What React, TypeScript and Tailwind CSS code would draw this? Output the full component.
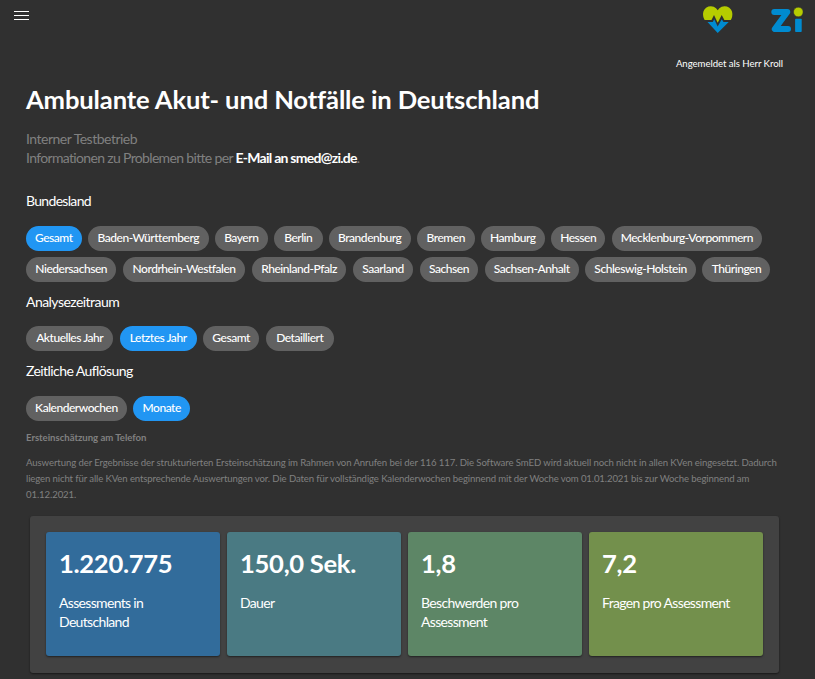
type ChipData = { label: string; width: string; active?: boolean };

const statesFirst: ChipData[] = [
  { label: "Gesamt", width: "w-[55.6px]", active: true },
  { label: "Baden-Württemberg", width: "w-[120.6px]" },
  { label: "Bayern", width: "w-[52.6px]" },
  { label: "Berlin", width: "w-[48.6px]" },
  { label: "Brandenburg", width: "w-[81.6px]" },
  { label: "Bremen", width: "w-[57.6px]" },
  { label: "Hamburg", width: "w-[63.6px]" },
  { label: "Hessen", width: "w-[54.6px]" },
  { label: "Mecklenburg-Vorpommern", width: "w-[150px]" },
];

const statesSecond: ChipData[] = [
  { label: "Niedersachsen", width: "w-[90.4px]" },
  { label: "Nordrhein-Westfalen", width: "w-[122.6px]" },
  { label: "Rheinland-Pfalz", width: "w-[94.6px]" },
  { label: "Saarland", width: "w-[60.6px]" },
  { label: "Sachsen", width: "w-[58.6px]" },
  { label: "Sachsen-Anhalt", width: "w-[93.8px]" },
  { label: "Schleswig-Holstein", width: "w-[111.2px]" },
  { label: "Thüringen", width: "w-[68px]" },
];

const periods: ChipData[] = [
  { label: "Aktuelles Jahr", width: "w-[87.4px]" },
  { label: "Letztes Jahr", width: "w-[76.8px]", active: true },
  { label: "Gesamt", width: "w-[56.4px]" },
  { label: "Detailliert", width: "w-[68px]" },
];

const resolutions: ChipData[] = [
  { label: "Kalenderwochen", width: "w-[100.8px]" },
  { label: "Monate", width: "w-[57px]", active: true },
];

const stats = [
  { value: "1.220.775", lines: ["Assessments in", "Deutschland"], color: "bg-[#326c9b]" },
  { value: "150,0 Sek.", lines: ["Dauer"], color: "bg-[#4a7a83]" },
  { value: "1,8", lines: ["Beschwerden pro", "Assessment"], color: "bg-[#5d8666]" },
  { value: "7,2", lines: ["Fragen pro Assessment"], color: "bg-[#73904c]" },
];

function ChipRow({ chips }: { chips: ChipData[] }) {
  return (
    <div className="flex gap-[6.4px]">
      {chips.map((chip) => (
        <button
          key={chip.label}
          className={`flex h-[25px] shrink-0 items-center justify-center rounded-full pb-px text-[12px] font-medium tracking-[-0.47px] whitespace-nowrap ${chip.width} ${
            chip.active ? "bg-[#2196f3]" : "bg-[#616161]"
          }`}
        >
          {chip.label}
        </button>
      ))}
    </div>
  );
}

function HeartLogo() {
  return (
    <svg width="30" height="28" viewBox="0 0 30 28" aria-hidden="true">
      <path
        d="M1.700 14C.7 12.500.1 10.800.1 9A7.800 7.800 0 0 1 14.700 4.300A7.800 7.800 0 0 1 29.300 9C29.300 10.800 28.800 12.500 27.800 14H21.400L18.700 9L14.700 16.700L11 8.900L8.500 14Z"
        fill="#b6cc00"
      />
      <path d="M4.500 16H9.800L11.200 13.300L14.700 20.500L18.700 13.300L20.500 16H25.700L14.700 27Z" fill="#008bd0" />
    </svg>
  );
}

function ZiLogo() {
  return (
    <svg width="34" height="28" viewBox="0 0 34 28" aria-hidden="true">
      <path d="M4.300 6H17.300L4.800 23H18" fill="none" stroke="#008bd0" strokeWidth="6" strokeLinecap="round" strokeLinejoin="round" />
      <rect x="25.100" y="12.800" width="6.600" height="13.300" rx="0.800" fill="#008bd0" />
      <circle cx="28.300" cy="6" r="4.800" fill="#b6cc00" stroke="#303030" strokeWidth="0.500" />
    </svg>
  );
}

export default function App() {
  return (
    <div className="h-[679px] w-full overflow-hidden bg-[#303030] font-[Lato,sans-serif] text-white">
      <header className="flex h-[54px] items-start justify-between pr-[11px] pl-[14px]">
        <button aria-label="Menü" className="mt-[11px] flex w-[15px] flex-col gap-[3px]">
          <span className="h-px w-full bg-white" />
          <span className="h-px w-full bg-white" />
          <span className="h-px w-full bg-white" />
        </button>
        <div className="flex gap-[37px] pt-[6px]">
          <HeartLogo />
          <ZiLogo />
        </div>
      </header>
      <p className="h-[25px] pr-8 text-right text-[9.6px] leading-[19px] tracking-[-0.04px]">Angemeldet als Herr Kroll</p>

      <main className="px-[26px]">
        <h1 className="h-[50px] text-[25.6px] leading-[40px] font-bold tracking-[-0.14px] whitespace-nowrap">
          Ambulante Akut- und Notfälle in Deutschland
        </h1>
        <p className="h-[61px] text-[14px] leading-[19px] text-[#808080]">
          <span className="tracking-[-0.5px]">Interner Testbetrieb</span>
          <br />
          <span className="tracking-[-0.66px]">Informationen zu Problemen bitte per </span>
          <a className="font-bold tracking-[-0.74px] text-white">E-Mail an smed@zi.de</a>.
        </p>

        <section className="h-[101px]">
          <h2 className="h-[36px] text-[14px] leading-[22px] tracking-[-0.68px]">Bundesland</h2>
          <div className="flex flex-col gap-[6px]">
            <ChipRow chips={statesFirst} />
            <ChipRow chips={statesSecond} />
          </div>
        </section>
        <section className="h-[69px]">
          <h2 className="h-[35px] text-[14px] leading-[22px] tracking-[-0.54px]">Analysezeitraum</h2>
          <ChipRow chips={periods} />
        </section>
        <section className="h-[69px]">
          <h2 className="h-[36px] text-[14px] leading-[22px] tracking-[-0.58px]">Zeitliche Auflösung</h2>
          <ChipRow chips={resolutions} />
        </section>

        <h3 className="h-[26px] text-[9.6px] leading-[18px] font-bold tracking-[-0.03px] text-[#808080]">Ersteinschätzung am Telefon</h3>
        <p className="h-[61px] text-[9.6px] leading-[16px] tracking-[-0.1px] whitespace-nowrap text-[#808080]">
          Auswertung der Ergebnisse der strukturierten Ersteinschätzung im Rahmen von Anrufen bei der 116 117. Die Software SmED wird aktuell noch nicht in allen KVen eingesetzt. Dadurch
          <br />
          <span className="tracking-[-0.12px]">
            liegen nicht für alle KVen entsprechende Auswertungen vor. Die Daten für vollständige Kalenderwochen beginnend mit der Woche vom 01.01.2021 bis zur Woche beginnend am
          </span>
          <br />
          01.12.2021.
        </p>

        <div className="ml-1 grid h-[157px] w-[749px] grid-cols-4 gap-[7px] rounded-[3px] bg-[#424242] p-4 pb-[17px] shadow-[0_1px_2px_rgba(0,0,0,0.5)]">
          {stats.map((stat) => (
            <article key={stat.value} className={`rounded-[3px] px-[13px] pt-[13px] shadow-[0_1px_2px_rgba(0,0,0,0.5)] ${stat.color}`}>
              <p className="h-[48px] text-[25.6px] leading-[36px] font-bold tracking-[-0.3px] whitespace-nowrap">{stat.value}</p>
              {stat.lines.map((line) => (
                <p key={line} className="text-[14px] leading-[19px] tracking-[-0.67px] whitespace-nowrap">
                  {line}
                </p>
              ))}
            </article>
          ))}
        </div>
      </main>
    </div>
  );
}
